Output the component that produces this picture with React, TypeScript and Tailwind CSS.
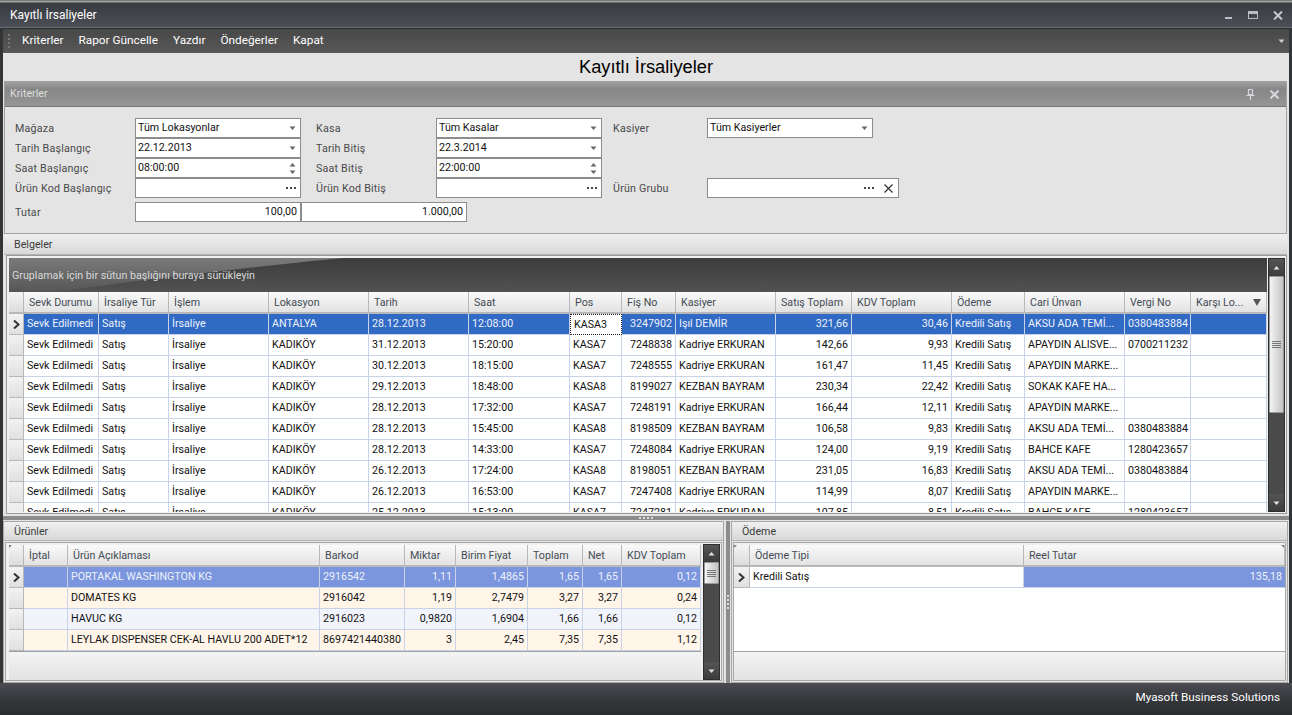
import React from "react";

const font = "font-['Roboto','Liberation_Sans',Arial,sans-serif] text-[10.7px]";

type Col = { label: string; w: string };

const topCols: Col[] = [
  { label: "Sevk Durumu", w: "w-[75px]" },
  { label: "İrsaliye Tür", w: "w-[70px]" },
  { label: "İşlem", w: "w-[100px]" },
  { label: "Lokasyon", w: "w-[100px]" },
  { label: "Tarih", w: "w-[100px]" },
  { label: "Saat", w: "w-[101px]" },
  { label: "Pos", w: "w-[52px]" },
  { label: "Fiş No", w: "w-[54px]" },
  { label: "Kasiyer", w: "w-[100px]" },
  { label: "Satış Toplam", w: "w-[76px]" },
  { label: "KDV Toplam", w: "w-[100px]" },
  { label: "Ödeme", w: "w-[73px]" },
  { label: "Cari Ünvan", w: "w-[100px]" },
  { label: "Vergi No", w: "w-[66px]" },
  { label: "Karşı Lo...", w: "w-[76px]" },
];
const topRight = [false, false, false, false, false, false, false, true, false, true, true, false, false, false, false];

const topRows = [
  ["Sevk Edilmedi", "Satış", "İrsaliye", "ANTALYA", "28.12.2013", "12:08:00", "KASA3", "3247902", "Işıl DEMİR", "321,66", "30,46", "Kredili Satış", "AKSU ADA TEMİ...", "0380483884", ""],
  ["Sevk Edilmedi", "Satış", "İrsaliye", "KADIKÖY", "31.12.2013", "15:20:00", "KASA7", "7248838", "Kadriye ERKURAN", "142,66", "9,93", "Kredili Satış", "APAYDIN ALISVE...", "0700211232", ""],
  ["Sevk Edilmedi", "Satış", "İrsaliye", "KADIKÖY", "30.12.2013", "18:15:00", "KASA7", "7248555", "Kadriye ERKURAN", "161,47", "11,45", "Kredili Satış", "APAYDIN MARKE...", "", ""],
  ["Sevk Edilmedi", "Satış", "İrsaliye", "KADIKÖY", "29.12.2013", "18:48:00", "KASA8", "8199027", "KEZBAN BAYRAM", "230,34", "22,42", "Kredili Satış", "SOKAK KAFE HA...", "", ""],
  ["Sevk Edilmedi", "Satış", "İrsaliye", "KADIKÖY", "28.12.2013", "17:32:00", "KASA7", "7248191", "Kadriye ERKURAN", "166,44", "12,11", "Kredili Satış", "APAYDIN MARKE...", "", ""],
  ["Sevk Edilmedi", "Satış", "İrsaliye", "KADIKÖY", "28.12.2013", "15:45:00", "KASA8", "8198509", "KEZBAN BAYRAM", "106,58", "9,83", "Kredili Satış", "AKSU ADA TEMİ...", "0380483884", ""],
  ["Sevk Edilmedi", "Satış", "İrsaliye", "KADIKÖY", "28.12.2013", "14:33:00", "KASA7", "7248084", "Kadriye ERKURAN", "124,00", "9,19", "Kredili Satış", "BAHCE KAFE", "1280423657", ""],
  ["Sevk Edilmedi", "Satış", "İrsaliye", "KADIKÖY", "26.12.2013", "17:24:00", "KASA8", "8198051", "KEZBAN BAYRAM", "231,05", "16,83", "Kredili Satış", "AKSU ADA TEMİ...", "0380483884", ""],
  ["Sevk Edilmedi", "Satış", "İrsaliye", "KADIKÖY", "26.12.2013", "16:53:00", "KASA7", "7247408", "Kadriye ERKURAN", "114,99", "8,07", "Kredili Satış", "APAYDIN MARKE...", "", ""],
  ["Sevk Edilmedi", "Satış", "İrsaliye", "KADIKÖY", "25.12.2013", "15:13:00", "KASA7", "7247281", "Kadriye ERKURAN", "107,85", "8,51", "Kredili Satış", "BAHCE KAFE", "1280423657", ""],
];

const prodCols: Col[] = [
  { label: "İptal", w: "w-[44px]" },
  { label: "Ürün Açıklaması", w: "w-[252px]" },
  { label: "Barkod", w: "w-[85px]" },
  { label: "Miktar", w: "w-[51px]" },
  { label: "Birim Fiyat", w: "w-[72px]" },
  { label: "Toplam", w: "w-[55px]" },
  { label: "Net", w: "w-[39px]" },
  { label: "KDV Toplam", w: "w-[79px]" },
];
const prodRight = [false, false, false, true, true, true, true, true];
const prodRows = [
  ["", "PORTAKAL WASHINGTON KG", "2916542", "1,11", "1,4865", "1,65", "1,65", "0,12"],
  ["", "DOMATES KG", "2916042", "1,19", "2,7479", "3,27", "3,27", "0,24"],
  ["", "HAVUC KG", "2916023", "0,9820", "1,6904", "1,66", "1,66", "0,12"],
  ["", "LEYLAK DISPENSER CEK-AL HAVLU 200 ADET*12", "8697421440380", "3", "2,45", "7,35", "7,35", "1,12"],
];

const headerCell =
  "h-full shrink-0 flex items-center pl-[5px] pr-[2px] pt-[2px] border-r border-b-2 border-[#b8b8b8] bg-gradient-to-b from-[#fafafa] to-[#e2e2e2] text-[#444b55] overflow-hidden whitespace-nowrap";

function Chevron() {
  return (
    <svg width="7" height="9" viewBox="0 0 7 9">
      <path d="M1 0.5 L5.5 4.5 L1 8.5" fill="none" stroke="#333" strokeWidth="2" />
    </svg>
  );
}

function Caret({ up = false, color = "#666" }: { up?: boolean; color?: string }) {
  return (
    <svg width="7" height="4" viewBox="0 0 7 4">
      <path d={up ? "M0.5 3.5 L3.5 0 L6.5 3.5 Z" : "M0.5 0.5 L6.5 0.5 L3.5 4 Z"} fill={color} />
    </svg>
  );
}

function Dots() {
  return (
    <span className="flex gap-[2px]">
      <i className="w-[2px] h-[2px] bg-[#444]" />
      <i className="w-[2px] h-[2px] bg-[#444]" />
      <i className="w-[2px] h-[2px] bg-[#444]" />
    </span>
  );
}

function Corner({ right = false }: { right?: boolean }) {
  return (
    <svg width="3" height="3" viewBox="0 0 3 3" className={`absolute top-0 ${right ? "right-0" : "left-0"}`}>
      <path d={right ? "M0 0 L3 0 L3 3 Z" : "M0 0 L3 0 L0 3 Z"} fill="#808080" />
    </svg>
  );
}

function Field({ w, text, kind, right }: { w: string; text?: string; kind?: "drop" | "spin" | "dots" | "clear"; right?: boolean }) {
  return (
    <div className={`${w} h-[20px] bg-white border border-[#8c8c8c] flex items-center shrink-0 text-[#111] pl-[2px] pr-[3px] whitespace-nowrap`}>
      <span className={`flex-1 pt-[1px] ${right ? "text-right" : ""}`}>{text}</span>
      {kind === "drop" && <span className="mr-[1px] flex"><Caret /></span>}
      {kind === "spin" && (
        <span className="mr-[1px] flex flex-col gap-[3px]"><Caret up /><Caret /></span>
      )}
      {kind === "dots" && <span className="mr-[1px]"><Dots /></span>}
      {kind === "clear" && (
        <span className="flex items-center gap-[10px] mr-[2px]">
          <Dots />
          <svg width="9" height="9" viewBox="0 0 9 9"><path d="M0.5 0.5 L8.5 8.5 M8.5 0.5 L0.5 8.5" stroke="#333" strokeWidth="1.2" /></svg>
        </span>
      )}
    </div>
  );
}

function Label({ w, children }: { w: string; children?: React.ReactNode }) {
  return <div className={`${w} shrink-0 pt-[3px] text-[#4a4a4a] tracking-[0.2px] whitespace-nowrap`}>{children}</div>;
}

function Grip() {
  return (
    <>
      <i className="w-[2px] h-[2px] bg-[#ddd]" />
      <i className="w-[2px] h-[2px] bg-[#ddd]" />
      <i className="w-[2px] h-[2px] bg-[#ddd]" />
      <i className="w-[2px] h-[2px] bg-[#ddd]" />
    </>
  );
}

function Scrollbar({ thumbClass, boxClass }: { thumbClass: string; boxClass: string }) {
  return (
    <div className={`w-[17px] ${boxClass} shrink-0 bg-[#4a4a4a] border border-[#2e2e2e] flex flex-col items-center`}>
      <div className="h-[17px] shrink-0 w-full flex items-center justify-center bg-gradient-to-b from-[#555] to-[#3c3c3c]"><Caret up color="#e0e0e0" /></div>
      <div className={`${thumbClass} shrink-0 w-[15px] rounded-[1px] bg-gradient-to-r from-[#f4f4f4] to-[#c4c4c4] border border-[#999] flex flex-col items-center justify-center gap-[1px]`}>
        <i className="w-[9px] h-px bg-[#777]" />
        <i className="w-[9px] h-px bg-[#777]" />
        <i className="w-[9px] h-px bg-[#777]" />
        <i className="w-[9px] h-px bg-[#777]" />
      </div>
      <div className="flex-1" />
      <div className="h-[17px] shrink-0 w-full flex items-center justify-center bg-gradient-to-b from-[#555] to-[#3c3c3c]"><Caret color="#e0e0e0" /></div>
    </div>
  );
}

function TopGrid() {
  return (
    <div className="h-[259px] shrink-0 ml-[3px] mr-[2px] border border-[#9a9a9a] pl-[2px] pr-[1px] pt-[2px] pb-[1px] flex bg-[#f0f0f0]">
      <div className="flex-1 flex flex-col overflow-hidden min-w-0 bg-white">
        <div className="h-[34px] shrink-0 bg-[#454545] relative overflow-hidden flex items-center pl-[3px] text-[#d8d8d8] pt-[3px]">
          <svg className="absolute inset-0" width="1262" height="34" viewBox="0 0 1262 34">
            <defs>
              <linearGradient id="sheenDark" x1="0" y1="0" x2="0" y2="1">
                <stop offset="0" stopColor="#3c3c3c" />
                <stop offset="1" stopColor="#525252" />
              </linearGradient>
              <linearGradient id="sheenLight" x1="0" y1="0" x2="0" y2="1">
                <stop offset="0" stopColor="#7a7a7a" />
                <stop offset="1" stopColor="#565656" />
              </linearGradient>
            </defs>
            <rect width="1262" height="34" fill="url(#sheenDark)" />
            <path d="M0 0 L335 0 C 250 8 130 22 45 34 L0 34 Z" fill="url(#sheenLight)" />
          </svg>
          <span className="relative">Gruplamak için bir sütun başlığını buraya sürükleyin</span>
        </div>
        <div className="h-[22px] shrink-0 flex">
          <div className="w-[15px] h-full shrink-0 border-r border-b-2 border-[#b8b8b8] bg-gradient-to-b from-[#f4f4f4] to-[#dcdcdc]" />
          {topCols.map((c, i) => (
            <div key={c.label} className={`${c.w} ${headerCell} relative`}>
              {c.label}
              {i === 14 && (
                <span className="absolute right-[5px] top-[7px] flex">
                  <svg width="8" height="7" viewBox="0 0 8 7"><path d="M0 0 L8 0 L4 7 Z" fill="#555" /></svg>
                </span>
              )}
            </div>
          ))}
        </div>
        <div className="flex-1 overflow-hidden">
          {topRows.map((r, ri) => (
            <div key={ri} className="h-[21px] flex">
              <div className="w-[15px] shrink-0 border-r border-b border-[#b8b8b8] bg-gradient-to-b from-[#f2f2f2] to-[#e0e0e0] flex items-center justify-center">
                {ri === 0 && <Chevron />}
              </div>
              {r.map((v, ci) => {
                const sel = ri === 0;
                const focus = sel && ci === 6;
                return (
                  <div
                    key={ci}
                    className={`${topCols[ci].w} shrink-0 h-full flex items-center px-[3px] pt-[1px] whitespace-nowrap overflow-hidden ${topRight[ci] ? "justify-end" : ""} ${
                      focus
                        ? "bg-white text-[#111] border border-dotted border-[#222]"
                        : sel
                          ? "bg-[#316ac5] text-[#eef2fa] border-r border-b border-[#c9d3e8]"
                          : "bg-white text-[#111] border-r border-b border-[#c9d3e8]"
                    }`}
                  >
                    {v}
                  </div>
                );
              })}
            </div>
          ))}
        </div>
      </div>
      <div className="w-[1px] shrink-0" />
      <Scrollbar thumbClass="h-[137px]" boxClass="h-full" />
    </div>
  );
}

function SectionTitle({ children }: { children: React.ReactNode }) {
  return (
    <div className="h-[19px] shrink-0 flex items-center pl-[10px] pt-[3px] text-[#3c3c3c] bg-gradient-to-b from-[#f0f0f0] to-[#d8d8d8] border-b border-[#b4b4b4]">
      {children}
    </div>
  );
}

export default function App() {
  return (
    <div className={`${font} w-[1292px] h-[715px] overflow-hidden flex flex-col bg-[#333438]`}>
      <div className="h-[3px] shrink-0 bg-gradient-to-b from-[#6a6a6a] via-[#a0a0a0] to-[#5a5c60]" />
      {/* title bar */}
      <div className="h-[25px] shrink-0 flex items-center pl-[10px] pr-[9px] bg-gradient-to-b from-[#383b40] to-[#4b4e56] border-b border-[#6a6d74]">
        <span className="flex-1 text-white text-[12px]">Kayıtlı İrsaliyeler</span>
        <div className="flex items-center gap-[15px]">
          <svg width="9" height="10" viewBox="0 0 9 10"><rect x="1" y="7" width="7" height="2" fill="#b8bcc4" /></svg>
          <svg width="10" height="9" viewBox="0 0 10 9"><rect x="0.5" y="0.5" width="9" height="7" fill="none" stroke="#b8bcc4" /><rect x="0" y="0" width="10" height="3" fill="#b8bcc4" /></svg>
          <svg width="10" height="9" viewBox="0 0 10 9"><path d="M1 0.5 L9 8.5 M9 0.5 L1 8.5" stroke="#c4c8cf" strokeWidth="2" /></svg>
        </div>
      </div>
      <div className="flex-1 flex flex-col min-h-0 px-[3px]">
        {/* toolbar */}
        <div className="h-[25px] shrink-0 flex items-center bg-gradient-to-b from-[#484848] to-[#585858] border-t border-[#2c2c2c] pl-[5px] pr-[4px] pb-[1px] text-white text-[11.8px]">
          <div className="w-[4px] h-[14px] mr-[10px] flex flex-col justify-between">
            <i className="w-[2px] h-[2px] bg-[#777]" />
            <i className="w-[2px] h-[2px] bg-[#777]" />
            <i className="w-[2px] h-[2px] bg-[#777]" />
            <i className="w-[2px] h-[2px] bg-[#777]" />
          </div>
          <div className="flex gap-[15px] flex-1">
            <span>Kriterler</span>
            <span>Rapor Güncelle</span>
            <span>Yazdır</span>
            <span>Öndeğerler</span>
            <span>Kapat</span>
          </div>
          <Caret color="#cfcfcf" />
        </div>
        {/* content */}
        <div className="flex-1 min-h-0 bg-[#e4e4e4] flex flex-col">
          <div className="h-[28px] shrink-0 flex items-center justify-center font-['Liberation_Sans',Arial,sans-serif] text-[18.3px] text-black">Kayıtlı İrsaliyeler</div>
          {/* Kriterler */}
          <div className="h-[153px] shrink-0 ml-[1px] mr-[2px] border border-[#a0a0a0] flex flex-col">
            <div className="h-[25px] shrink-0 flex items-center pl-[5px] pr-[7px] pt-[1px] text-[#dedede] bg-gradient-to-b from-[#a0a0a0] via-[#868686] via-30% to-[#969696] border-b border-[#777]">
              <span className="flex-1">Kriterler</span>
              <div className="flex items-center gap-[15px]">
                <svg width="9" height="11" viewBox="0 0 9 11"><path d="M2.5 0.5 H6.5 V5.5 H2.5 Z M0.5 6.5 H8.5 M4.5 6.5 V11" fill="none" stroke="#d4d8de" strokeWidth="1.2" /></svg>
                <svg width="9" height="9" viewBox="0 0 9 9"><path d="M0.5 0.5 L8.5 8.5 M8.5 0.5 L0.5 8.5" stroke="#d4d8de" strokeWidth="2" /></svg>
              </div>
            </div>
            <div className="flex-1 pl-[10px] pt-[11px] flex flex-col">
              <div className="h-[20px] flex items-center">
                <Label w="w-[120px]">Mağaza</Label>
                <Field w="w-[166px]" text="Tüm Lokasyonlar" kind="drop" />
                <span className="w-[15px]" />
                <Label w="w-[120px]">Kasa</Label>
                <Field w="w-[166px]" text="Tüm Kasalar" kind="drop" />
                <span className="w-[11px]" />
                <Label w="w-[94px]">Kasiyer</Label>
                <Field w="w-[166px]" text="Tüm Kasiyerler" kind="drop" />
              </div>
              <div className="h-[20px] flex items-center">
                <Label w="w-[120px]">Tarih Başlangıç</Label>
                <Field w="w-[166px]" text="22.12.2013" kind="drop" />
                <span className="w-[15px]" />
                <Label w="w-[120px]">Tarih Bitiş</Label>
                <Field w="w-[166px]" text="22.3.2014" kind="drop" />
              </div>
              <div className="h-[20px] flex items-center">
                <Label w="w-[120px]">Saat Başlangıç</Label>
                <Field w="w-[166px]" text="08:00:00" kind="spin" />
                <span className="w-[15px]" />
                <Label w="w-[120px]">Saat Bitiş</Label>
                <Field w="w-[166px]" text="22:00:00" kind="spin" />
              </div>
              <div className="h-[20px] flex items-center">
                <Label w="w-[120px]">Ürün Kod Başlangıç</Label>
                <Field w="w-[166px]" kind="dots" />
                <span className="w-[15px]" />
                <Label w="w-[120px]">Ürün Kod Bitiş</Label>
                <Field w="w-[166px]" kind="dots" />
                <span className="w-[11px]" />
                <Label w="w-[94px]">Ürün Grubu</Label>
                <Field w="w-[192px]" kind="clear" />
              </div>
              <div className="h-[20px] flex items-center mt-[4px]">
                <Label w="w-[120px]">Tutar</Label>
                <Field w="w-[166px]" text="100,00" right />
                <Field w="w-[166px]" text="1.000,00" right />
              </div>
            </div>
          </div>
          <div className="h-[21px] shrink-0 flex items-center pl-[10px] pt-[3px] ml-[1px] mr-[2px] text-[#3c3c3c] bg-gradient-to-b from-[#f0f0f0] to-[#d8d8d8] border-b border-[#b4b4b4]">
            Belgeler
          </div>
          <TopGrid />
          {/* splitter */}
          <div className="h-[4px] shrink-0 bg-[#8c8c8c] flex items-center justify-center gap-[2px] mt-[2px] mb-[1px]">
            <Grip />
          </div>
          {/* bottom panels */}
          <div className="flex-1 min-h-0 flex">
            <div className="w-[721px] shrink-0 flex flex-col border border-[#a8a8a8]">
              <SectionTitle>Ürünler</SectionTitle>
              <div className="flex-1 flex m-[1px] border border-[#a8a8a8] min-h-0 pl-[3px] pr-[1px] pt-[2px] bg-[#f0f0f0]">
                <div className="flex-1 flex flex-col min-w-0">
                  <div className="h-[107px] shrink-0 bg-white overflow-hidden border-b border-[#a0a0a0]">
                    <div className="h-[22px] flex">
                      <div className="w-[15px] relative shrink-0 border-r border-b-2 border-[#b8b8b8] bg-gradient-to-b from-[#f4f4f4] to-[#dcdcdc]"><Corner /></div>
                      {prodCols.map((c) => (
                        <div key={c.label} className={`${c.w} ${headerCell}`}>{c.label}</div>
                      ))}
                    </div>
                    {prodRows.map((r, ri) => (
                      <div key={ri} className="h-[21px] flex">
                        <div className="w-[15px] shrink-0 border-r border-b border-[#b8b8b8] bg-gradient-to-b from-[#f2f2f2] to-[#e0e0e0] flex items-center justify-center">
                          {ri === 0 && <Chevron />}
                        </div>
                        {r.map((v, ci) => (
                          <div
                            key={ci}
                            className={`${prodCols[ci].w} shrink-0 flex items-center px-[3px] pt-[1px] border-r border-b border-[#c9d3e8] whitespace-nowrap overflow-hidden ${prodRight[ci] ? "justify-end" : ""} ${
                              ri === 0
                                ? "bg-[#7b96de] text-[#eef2fa]"
                                : ri === 2
                                  ? "bg-[#f2f4fc] text-[#111]"
                                  : "bg-[#fff5e9] text-[#111]"
                            }`}
                          >
                            {v}
                          </div>
                        ))}
                      </div>
                    ))}
                  </div>
                  <div className="h-[28px] shrink-0 bg-gradient-to-b from-[#f4f4f4] to-[#e2e2e2]" />
                </div>
                <div className="w-[2px] shrink-0" />
                <Scrollbar thumbClass="h-[22px]" boxClass="h-[136px] -mt-[1px]" />
              </div>
            </div>
            {/* vertical splitter */}
            <div className="w-[7px] shrink-0 flex justify-center">
              <div className="w-[4px] h-full bg-[#8c8c8c] flex flex-col items-center justify-center gap-[2px]">
                <Grip />
              </div>
            </div>
            <div className="flex-1 min-w-0 mr-[1px] flex flex-col border border-[#a8a8a8]">
              <SectionTitle>Ödeme</SectionTitle>
              <div className="flex-1 flex flex-col m-[1px] border border-[#a8a8a8] min-h-0 pt-[2px] bg-[#f0f0f0]">
                <div className="h-[107px] shrink-0 bg-white overflow-hidden border-b border-[#a0a0a0]">
                  <div className="h-[22px] flex">
                    <div className="w-[16px] relative shrink-0 border-r border-b-2 border-[#b8b8b8] bg-gradient-to-b from-[#f4f4f4] to-[#dcdcdc]"><Corner /></div>
                    <div className={`w-[274px] ${headerCell}`}>Ödeme Tipi</div>
                    <div className={`w-[261px] relative ${headerCell}`}>Reel Tutar<Corner right /></div>
                  </div>
                  <div className="h-[21px] flex">
                    <div className="w-[16px] shrink-0 border-r border-b border-[#b8b8b8] bg-gradient-to-b from-[#f2f2f2] to-[#e0e0e0] flex items-center justify-center"><Chevron /></div>
                    <div className="w-[274px] shrink-0 flex items-center px-[3px] pt-[1px] border-r border-b border-[#c9d3e8] text-[#111]">Kredili Satış</div>
                    <div className="w-[261px] shrink-0 flex items-center justify-end px-[3px] pt-[1px] border-b border-[#c9d3e8] bg-[#7b96de] text-[#eef2fa]">135,18</div>
                  </div>
                </div>
                <div className="h-[28px] shrink-0 bg-gradient-to-b from-[#f4f4f4] to-[#e2e2e2]" />
              </div>
            </div>
          </div>
        </div>
      </div>
      {/* status bar */}
      <div className="h-[32px] shrink-0 flex items-center justify-end pr-[12px] pb-[3px] text-white text-[11.7px] bg-gradient-to-b from-[#4a4c52] via-[#35373b] to-[#2c2d31]">
        Myasoft Business Solutions
      </div>
    </div>
  );
}
